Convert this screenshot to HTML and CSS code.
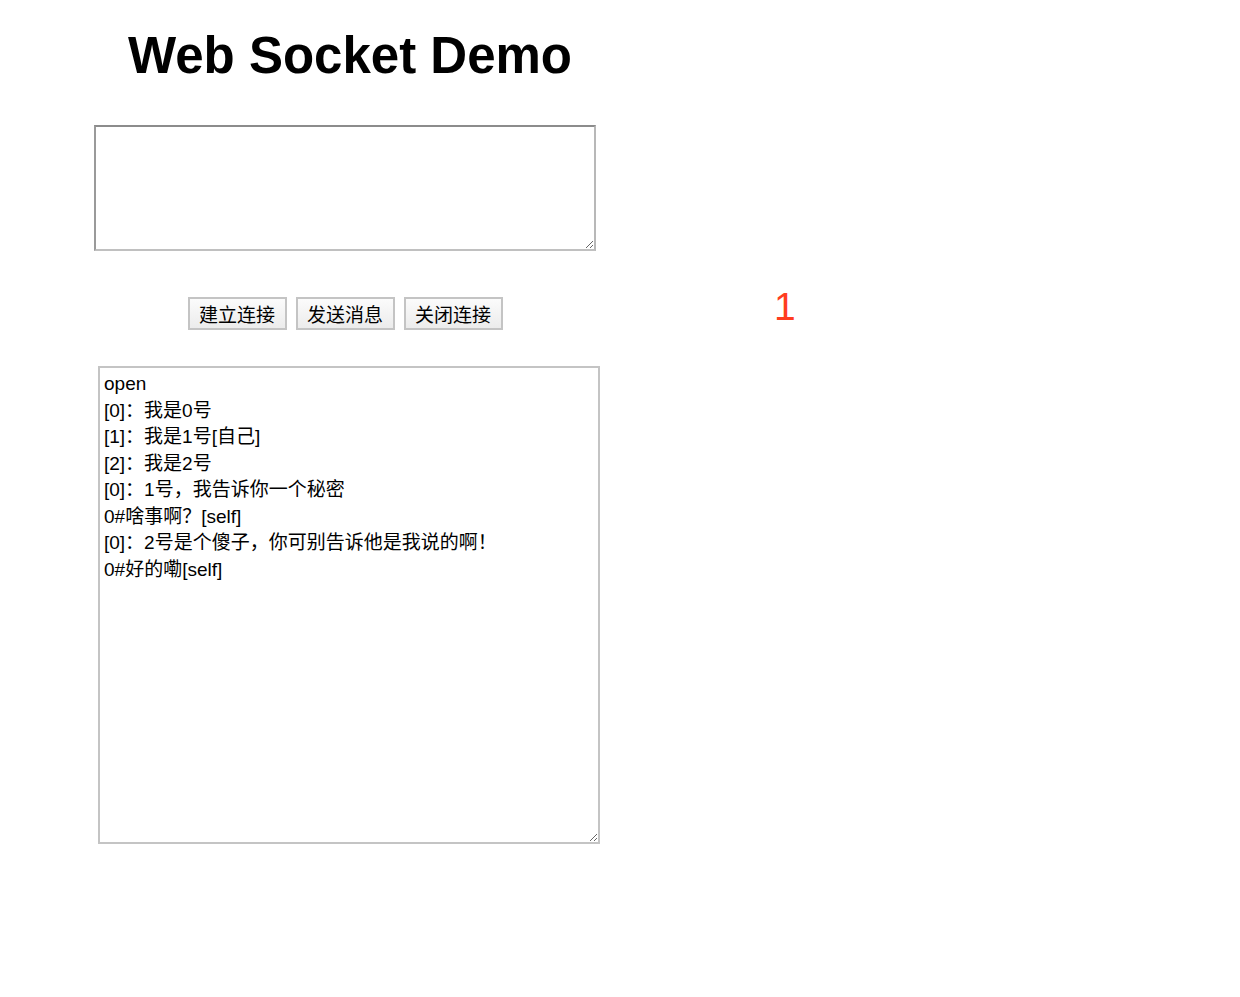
FILE: index.html
```html
<!DOCTYPE html>
<html>
<head>
    <meta charset="utf-8">
    <title>Web Socket Demo</title>
    <link rel="stylesheet" href="styles.css">
</head>
<body>
<div class="page">
    <div class="demo">
        <h1 class="demo-title">Web Socket Demo</h1>
        <textarea id="message" class="demo-input"></textarea>
        <div class="demo-actions">
            <button id="open" class="demo-button">建立连接</button>
            <button id="send" class="demo-button">发送消息</button>
            <button id="close" class="demo-button">关闭连接</button>
        </div>
        <textarea id="log" class="demo-log">open
[0]：我是0号
[1]：我是1号[自己]
[2]：我是2号
[0]：1号，我告诉你一个秘密
0#啥事啊？[self]
[0]：2号是个傻子，你可别告诉他是我说的啊！
0#好的嘞[self]</textarea>
    </div>
    <div id="count" class="demo-count">1</div>
</div>
</body>
</html>
```

FILE: styles.css
```css
/* Page layout */
body {
    margin: 0;
    background: #fff;
    font-family: "Liberation Sans", "Noto Sans CJK SC", sans-serif;
}

.page {
    display: flex;
    align-items: flex-start;
}

.demo {
    display: flex;
    flex-direction: column;
    width: 510px;
    padding-left: 94px;
}

/* Title */
.demo-title {
    width: 510px;
    margin: 26px 0 0 0;
    height: 99px;
    padding-left: 2px;
    box-sizing: border-box;
    font-size: 51px;
    font-weight: bold;
    text-align: center;
    line-height: 60px;
}

/* Message input */
.demo-input {
    width: 502px;
    height: 126px;
    box-sizing: border-box;
    margin: 0;
    border: 2px solid #a0a0a0;
    border-top-color: #8c8c8c;
    border-left-color: #9a9a9a;
    border-right-color: #b8b8b8;
    border-bottom-color: #c0c0c0;
    font-family: "Liberation Sans", "Noto Sans CJK SC", sans-serif;
    font-size: 19px;
}

/* Buttons row */
.demo-actions {
    display: flex;
    justify-content: center;
    gap: 9px;
    width: 502px;
    margin-top: 46px;
}

.demo-button {
    width: 99px;
    height: 33px;
    padding: 0;
    border: 2px solid #c4c4c4;
    border-radius: 0;
    background: linear-gradient(#fbfbfb, #ececec);
    color: #000;
    font-family: "Noto Sans CJK SC", sans-serif;
    font-size: 19px;
    line-height: 28px;
}

/* Message log */
.demo-log {
    width: 502px;
    height: 478px;
    box-sizing: border-box;
    margin: 36px 0 0 4px;
    padding: 3px 4px;
    border: 2px solid #c4c4c4;
    color: #000;
    font-family: "Liberation Sans", "Noto Sans CJK SC", sans-serif;
    font-size: 19px;
    line-height: 26.5px;
    white-space: pre-wrap;
}

/* Online counter */
.demo-count {
    margin: 285px 0 0 170px;
    color: #ff3d1f;
    font-family: "Liberation Sans", sans-serif;
    font-size: 39px;
    line-height: 44px;
}
```
